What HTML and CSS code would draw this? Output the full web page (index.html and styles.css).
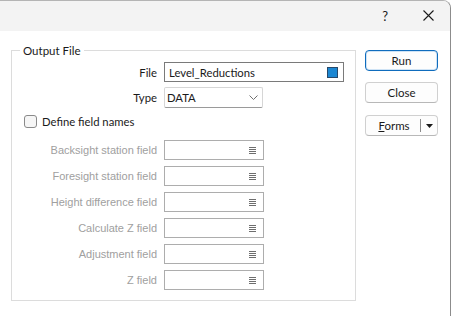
FILE: index.html
```html
<html>
    <head>
        <link rel="stylesheet" href="styles.css">
    </head>
    <body>
        <div class="window">
            <div class="titlebar">
                <span class="tb-help">?</span>
                <span class="tb-close">
                    <svg width="11" height="11" viewBox="0 0 11 11"><path d="M0.5 0.5 L10.5 10.5 M10.5 0.5 L0.5 10.5" stroke="#1a1a1a" stroke-width="1.1" fill="none"/></svg>
                </span>
            </div>
            <div class="body">
                <fieldset class="group">
                    <legend>Output File</legend>
                    <div class="form-row file-row">
                        <label class="lbl">File</label>
                        <div class="file-input"><span>Level_Reductions</span><i class="swatch"></i></div>
                    </div>
                    <div class="form-row type-row">
                        <label class="lbl">Type</label>
                        <div class="combo">
                            <span>DATA</span>
                            <svg width="9" height="5" viewBox="0 0 9 5"><path d="M0.5 0.5 L4.5 4.5 L8.5 0.5" stroke="#707070" stroke-width="1" fill="none"/></svg>
                        </div>
                    </div>
                    <label class="check"><span class="box"></span>Define field names</label>
                    <div class="fields">
                        <div class="form-row off"><label class="lbl">Backsight station field</label><div class="pick"><svg class="list-ico" width="7" height="7" viewBox="0 0 7 7"><path d="M0 0.5H7M0 2.5H7M0 4.5H7M0 6.5H7" stroke="#6e6e6e" stroke-width="1"/></svg></div></div>
                        <div class="form-row off"><label class="lbl">Foresight station field</label><div class="pick"><svg class="list-ico" width="7" height="7" viewBox="0 0 7 7"><path d="M0 0.5H7M0 2.5H7M0 4.5H7M0 6.5H7" stroke="#6e6e6e" stroke-width="1"/></svg></div></div>
                        <div class="form-row off"><label class="lbl">Height difference field</label><div class="pick"><svg class="list-ico" width="7" height="7" viewBox="0 0 7 7"><path d="M0 0.5H7M0 2.5H7M0 4.5H7M0 6.5H7" stroke="#6e6e6e" stroke-width="1"/></svg></div></div>
                        <div class="form-row off"><label class="lbl">Calculate Z field</label><div class="pick"><svg class="list-ico" width="7" height="7" viewBox="0 0 7 7"><path d="M0 0.5H7M0 2.5H7M0 4.5H7M0 6.5H7" stroke="#6e6e6e" stroke-width="1"/></svg></div></div>
                        <div class="form-row off"><label class="lbl">Adjustment field</label><div class="pick"><svg class="list-ico" width="7" height="7" viewBox="0 0 7 7"><path d="M0 0.5H7M0 2.5H7M0 4.5H7M0 6.5H7" stroke="#6e6e6e" stroke-width="1"/></svg></div></div>
                        <div class="form-row off"><label class="lbl">Z field</label><div class="pick"><svg class="list-ico" width="7" height="7" viewBox="0 0 7 7"><path d="M0 0.5H7M0 2.5H7M0 4.5H7M0 6.5H7" stroke="#6e6e6e" stroke-width="1"/></svg></div></div>
                    </div>
                </fieldset>
                <div class="side">
                    <button class="btn default">Run</button>
                    <button class="btn">Close</button>
                    <div class="btn split">
                        <span class="split-main"><u>F</u>orms</span>
                        <span class="split-drop">
                            <svg width="7" height="4" viewBox="0 0 7 4"><path d="M0 0H7L3.5 4Z" fill="#1a1a1a"/></svg>
                        </span>
                    </div>
                </div>
            </div>
        </div>
    </body>
</html>
```

FILE: styles.css
```css
html, body {
    margin: 0;
    width: 452px;
    height: 316px;
    background: #ffffff;
    overflow: hidden;
}

body {
    font-family: "Lato", "Liberation Sans", sans-serif;
    font-size: 11.3px;
    color: #1a1a1a;
}

.window {
    width: 451px;
    height: 316px;
    box-sizing: border-box;
    border-top: 1px solid #b4b4b4;
    border-right: 1px solid #8c8c8c;
    border-top-right-radius: 8px;
    background: #ffffff;
    overflow: hidden;
}

.titlebar {
    height: 30px;
    background: #f3f3f3;
    display: flex;
    align-items: center;
    justify-content: flex-end;
}

.tb-help {
    font-size: 13px;
    margin-right: 35px;
    margin-top: -1px;
}

.tb-close {
    display: flex;
    margin-right: 16px;
    margin-top: -1px;
}

.body {
    display: flex;
    align-items: flex-start;
}

.group {
    width: 345px;
    height: 258px;
    box-sizing: border-box;
    margin: 12px 0 0 11px;
    padding: 4px 11px 9px 8px;
    border: 1px solid #dcdcdc;
    min-inline-size: 0;
}

.group legend {
    padding: 0 3px;
    line-height: 15px;
    font-size: 11.5px;
    color: #1a1a1a;
}

.form-row {
    display: grid;
    grid-template-columns: 137px auto;
    column-gap: 7px;
    align-items: center;
    justify-items: start;
}

.form-row .lbl {
    justify-self: end;
}

.file-input {
    width: 180px;
    height: 20px;
    box-sizing: border-box;
    border: 1px solid #7a7a7a;
    display: flex;
    align-items: center;
    justify-content: space-between;
    padding: 0 5px 0 4px;
}

.swatch {
    width: 11px;
    height: 11px;
    box-sizing: border-box;
    background: #1c87d2;
    border: 1px solid #27496b;
}

.type-row {
    margin-top: 5px;
}

.combo {
    width: 99px;
    height: 21px;
    box-sizing: border-box;
    border: 1px solid #d6d6d6;
    border-bottom-color: #9a9a9a;
    border-radius: 2px;
    display: flex;
    align-items: center;
    justify-content: space-between;
    padding: 0 4px 0 2px;
}

.check {
    display: flex;
    align-items: center;
    gap: 5px;
    margin: 7px 0 0 4px;
    height: 13px;
}

.check .box {
    width: 13px;
    height: 13px;
    box-sizing: border-box;
    border: 1px solid #8a8a8a;
    border-radius: 3px;
    background: #f6f6f6;
}

.fields {
    display: flex;
    flex-direction: column;
    gap: 6px;
    margin-top: 12px;
}

.off .lbl {
    font-family: "Liberation Sans", sans-serif;
    font-size: 11px;
    color: #a0a0a0;
}

.pick {
    width: 100px;
    height: 20px;
    box-sizing: border-box;
    border: 1px solid #adadad;
    display: flex;
    align-items: flex-start;
    justify-content: flex-end;
    padding: 6px 7px 0 0;
}

.side {
    display: flex;
    flex-direction: column;
    margin: 19px 0 0 9px;
}

.btn {
    width: 73px;
    height: 21px;
    box-sizing: border-box;
    border: 1px solid #d0d0d0;
    border-bottom-color: #b8b8b8;
    border-radius: 4px;
    background: #fdfdfd;
    font-family: inherit;
    font-size: 11.5px;
    color: #1a1a1a;
    padding: 0;
    margin: 0;
}

.btn.default {
    border: 1px solid #0f6cbd;
    box-shadow: inset 0 0 0 1px #cfe3f5;
}

.btn + .btn {
    margin-top: 11px;
}

.btn.split {
    margin-top: 12px;
    display: flex;
    align-items: center;
}

.split-main {
    flex: 1;
    text-align: center;
    padding-left: 2px;
}

.split-drop {
    display: flex;
    align-items: center;
    justify-content: center;
    width: 16px;
    height: 13px;
    border-left: 1px solid #8a8a8a;
}
```
